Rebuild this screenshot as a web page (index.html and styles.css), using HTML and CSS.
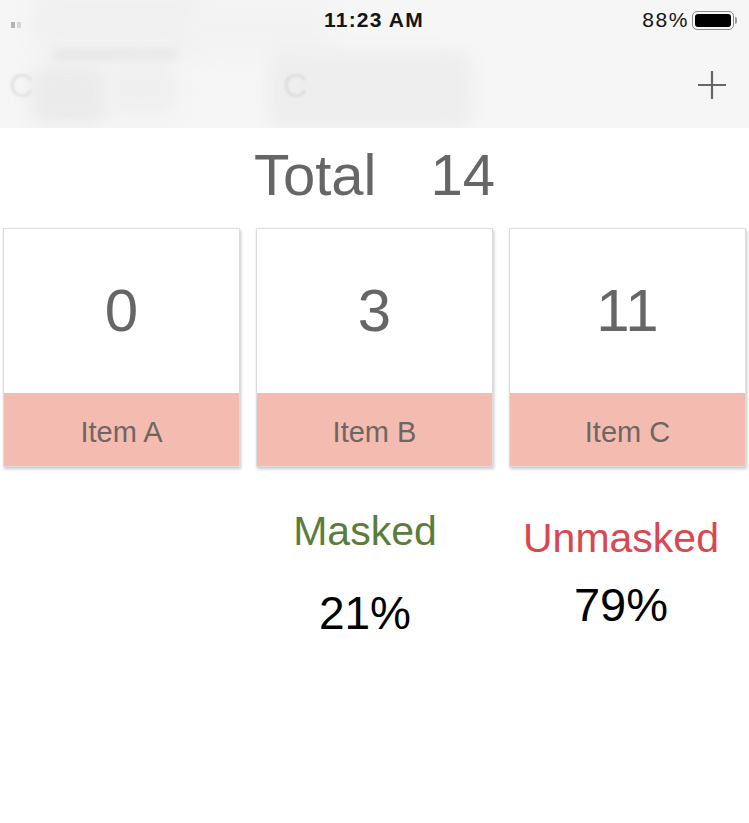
FILE: index.html
```html
<!DOCTYPE html>
<html>
<head>
<meta charset="utf-8">
<link rel="stylesheet" href="styles.css">
</head>
<body>
<header class="header">
  <div class="blur b1"></div>
  <div class="blur b2"></div>
  <div class="blur b3"></div>
  <div class="blur b4"></div>
  <div class="blur b5"></div>
  <div class="blur b6"></div>
  <span class="ghost g1">C</span>
  <span class="ghost g2">C</span>
  <div class="status">
    <div class="signal"><i></i><i></i></div>
    <div class="time">11:23 AM</div>
    <div class="batt-wrap">
      <span class="pct">88%</span>
      <span class="battery"><span class="fill"></span></span>
      <span class="nub"></span>
    </div>
  </div>
  <div class="nav">
    <svg class="plus" width="30" height="30" viewBox="0 0 30 30">
      <path d="M15 1V29M1 15H29" stroke="#666" stroke-width="2.2" fill="none"/>
    </svg>
  </div>
</header>

<main>
  <div class="total"><span>Total</span><span>14</span></div>

  <div class="cards">
    <div class="card">
      <div class="num">0</div>
      <div class="label">Item A</div>
    </div>
    <div class="card">
      <div class="num">3</div>
      <div class="label">Item B</div>
    </div>
    <div class="card">
      <div class="num">11</div>
      <div class="label">Item C</div>
    </div>
  </div>

  <div class="stats">
    <div class="col col-masked">
      <div class="stat-title masked">Masked</div>
      <div class="stat-val">21%</div>
    </div>
    <div class="col col-unmasked">
      <div class="stat-title unmasked">Unmasked</div>
      <div class="stat-val val2">79%</div>
    </div>
  </div>
  <div class="faint"></div>
</main>
</body>
</html>
```

FILE: styles.css
```css
html, body {
  margin: 0;
  padding: 0;
  background: #ffffff;
  font-family: "Liberation Sans", Arial, sans-serif;
}

.header {
  position: relative;
  height: 128px;
  background: #f6f6f6;
  overflow: hidden;
}

.blur {
  position: absolute;
  filter: blur(9px);
  border-radius: 18px;
}
.b1 { left: 32px; top: -10px; width: 176px; height: 62px; background: #f0f0f0; }
.b2 { left: 185px; top: 2px; width: 145px; height: 52px; background: #f2f2f2; }
.b3 { left: 52px; top: 50px; width: 125px; height: 10px; background: #e6e6e6; border-radius: 6px; filter: blur(4px); }
.b4 { left: 30px; top: 64px; width: 78px; height: 62px; background: #ebebeb; }
.b5 { left: 108px; top: 62px; width: 70px; height: 52px; background: #efefef; }
.b6 { left: 268px; top: 50px; width: 205px; height: 80px; background: #eeeeee; filter: blur(7px); }

.ghost {
  position: absolute;
  font-size: 34px;
  color: #e2e2e2;
  filter: blur(1px);
}
.g1 { left: 9px; top: 66px; }
.g2 { left: 283px; top: 66px; color: #dddddd; }

.status {
  position: relative;
  height: 40px;
  display: flex;
  align-items: center;
  justify-content: center;
}

.signal {
  position: absolute;
  left: 11px;
  top: 22px;
  display: flex;
  gap: 2px;
}
.signal i {
  display: block;
  width: 4px;
  height: 6px;
  background: #b5b5b5;
}
.signal i + i { background: #d6d6d6; }

.time {
  font-size: 21px;
  font-weight: 700;
  letter-spacing: 1.2px;
  color: #151515;
  margin-left: -1px;
}

.batt-wrap {
  position: absolute;
  right: 12px;
  top: 10px;
  display: flex;
  align-items: center;
  height: 20px;
}
.pct {
  font-size: 21px;
  color: #151515;
  letter-spacing: 1.6px;
  margin-right: 3px;
}
.battery {
  display: block;
  border: 1.5px solid #8a8a8a;
  border-radius: 5px;
  padding: 2px;
  box-sizing: content-box;
  width: 36px;
  height: 13px;
}
.fill {
  display: block;
  width: 100%;
  height: 100%;
  background: #000;
  border-radius: 3px;
}
.nub {
  display: block;
  width: 2px;
  height: 7px;
  background: #999;
  border-radius: 0 2px 2px 0;
  margin-left: 1px;
}

.nav {
  position: relative;
  height: 88px;
  display: flex;
  justify-content: flex-end;
  align-items: flex-start;
}
.plus {
  margin-top: 30px;
  margin-right: 22px;
}

main {
  position: relative;
}

.total {
  margin-top: 18px;
  display: flex;
  justify-content: center;
  gap: 54px;
  font-size: 58px;
  line-height: 1;
  color: #666;
}

.cards {
  display: flex;
  gap: 16px;
  padding: 0 3px;
  margin-top: 24px;
}

.card {
  flex: 1;
  border: 1px solid #dcdcdc;
  box-shadow: 1px 2px 3px rgba(0, 0, 0, 0.22);
  background: #fff;
  display: flex;
  flex-direction: column;
}

.num {
  height: 164px;
  display: flex;
  align-items: center;
  justify-content: center;
  font-size: 60px;
  line-height: 1;
  color: #666;
}

.label {
  height: 67px;
  padding-top: 6px;
  display: flex;
  align-items: center;
  justify-content: center;
  background: #f4bcb0;
  font-size: 29px;
  line-height: 1;
  color: #6e6664;
}

.stats {
  display: flex;
  padding-left: 237px;
}

.col {
  width: 256px;
  display: flex;
  flex-direction: column;
  align-items: center;
}

.stat-title {
  font-size: 41px;
  line-height: 1;
}
.masked {
  color: #5b7d3b;
  margin-top: 44px;
}
.unmasked {
  color: #da4750;
  margin-top: 51px;
}

.stat-val {
  font-size: 46px;
  line-height: 1;
  color: #000;
  margin-top: 38px;
}
.val2 {
  font-size: 47px;
  margin-top: 22px;
}

.faint {
  position: absolute;
  left: 392px;
  top: 562px;
  width: 58px;
  height: 16px;
  background: #f4f4f4;
  border-radius: 8px;
  filter: blur(4px);
}
```
